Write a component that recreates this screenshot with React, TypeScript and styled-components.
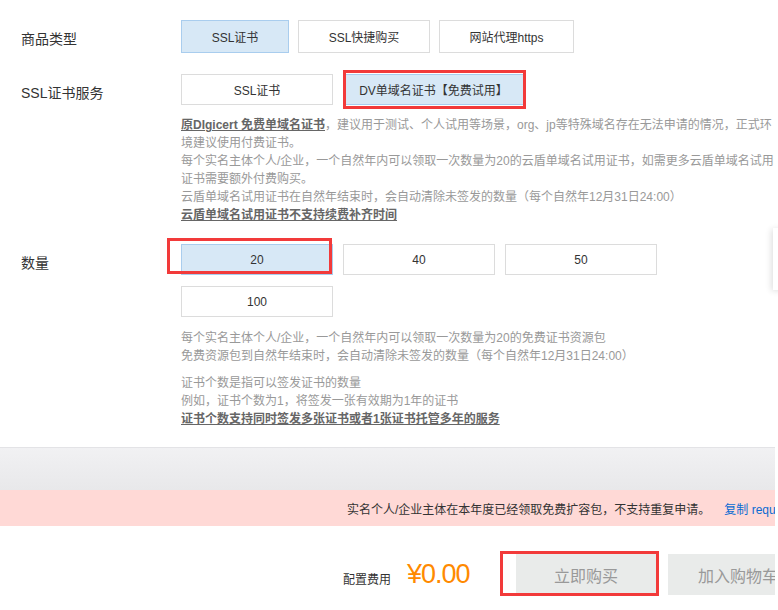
import styled, { createGlobalStyle } from 'styled-components';

const GlobalStyle = createGlobalStyle`
  html, body {
    margin: 0;
    padding: 0;
    background: #fff;
  }
  body {
    font-family: "Liberation Sans", Arial, "Noto Sans CJK SC", sans-serif;
    overflow: hidden;
  }
`;

const productTypes = [
  { id: 1, label: 'SSL证书', width: 108, active: true },
  { id: 2, label: 'SSL快捷购买', width: 132, active: false },
  { id: 3, label: '网站代理https', width: 135, active: false },
];

const services = [
  { id: 1, label: 'SSL证书', width: 152, active: false },
  { id: 2, label: 'DV单域名证书【免费试用】', width: 181, active: true },
];

const amounts = [
  { id: 1, label: '20', active: true },
  { id: 2, label: '40', active: false },
  { id: 3, label: '50', active: false },
  { id: 4, label: '100', active: false },
];

export default function App() {
  return (
    <Page>
      <GlobalStyle />
      <Main>
        <Form>
          <FieldRow>
            <Label>商品类型</Label>
            <Options $gap={9}>
              {productTypes.map((item) => (
                <Option key={item.id} $width={item.width} $height={33} $active={item.active}>
                  {item.label}
                </Option>
              ))}
            </Options>
          </FieldRow>

          <FieldRow $top={21}>
            <Label>SSL证书服务</Label>
            <div>
              <Options $gap={10}>
                {services.map((item) => (
                  <Option key={item.id} $width={item.width} $height={31} $active={item.active}>
                    {item.label}
                  </Option>
                ))}
              </Options>
              <Desc $top={11}>
                <Line>
                  <Strong>原DIgicert 免费单域名证书</Strong>，建议用于测试、个人试用等场景，org、jp等特殊域名存在无法申请的情况，正式环
                </Line>
                <Line>境建议使用付费证书。</Line>
                <Line>每个实名主体个人/企业，一个自然年内可以领取一次数量为20的云盾单域名试用证书，如需更多云盾单域名试用</Line>
                <Line>证书需要额外付费购买。</Line>
                <Line>云盾单域名试用证书在自然年结束时，会自动清除未签发的数量（每个自然年12月31日24:00）</Line>
                <Line>
                  <Strong>云盾单域名试用证书不支持续费补齐时间</Strong>
                </Line>
              </Desc>
            </div>
          </FieldRow>

          <FieldRow $top={20}>
            <Label>数量</Label>
            <div>
              <Options $gap={10} $rowGap={11} $width={476}>
                {amounts.map((item) => (
                  <Option key={item.id} $width={152} $height={31} $active={item.active}>
                    {item.label}
                  </Option>
                ))}
              </Options>
              <Desc $top={12}>
                <Line>每个实名主体个人/企业，一个自然年内可以领取一次数量为20的免费证书资源包</Line>
                <Line>免费资源包到自然年结束时，会自动清除未签发的数量（每个自然年12月31日24:00）</Line>
              </Desc>
              <Desc $top={9}>
                <Line>证书个数是指可以签发证书的数量</Line>
                <Line>例如，证书个数为1，将签发一张有效期为1年的证书</Line>
                <Line>
                  <Strong>证书个数支持同时签发多张证书或者1张证书托管多年的服务</Strong>
                </Line>
              </Desc>
            </div>
          </FieldRow>
        </Form>

        <Band />
        <Notice>
          实名个人/企业主体在本年度已经领取免费扩容包，不支持重复申请。
          <NoticeLink>复制 requestId</NoticeLink>
        </Notice>

        <Footer>
          <CostLabel>配置费用</CostLabel>
          <Price>¥0.00</Price>
          <BuyButton>立即购买</BuyButton>
          <BuyButton $gap={11}>加入购物车</BuyButton>
        </Footer>
      </Main>

      <SidePanel />
      <Marker $x={343} $y={70} $w={183} $h={39} />
      <Marker $x={167} $y={238} $w={165} $h={36} />
      <Marker $x={500} $y={551} $w={159} $h={45} />
    </Page>
  );
}

const Page = styled.div`
  position: relative;
  width: 778px;
  height: 610px;
  overflow: hidden;
`;

const Main = styled.div`
  width: 775px;
  overflow: hidden;
`;

const Form = styled.div`
  padding: 20px 0 0 21px;
`;

const FieldRow = styled.div<{ $top?: number }>`
  display: grid;
  grid-template-columns: 160px 1fr;
  margin-top: ${({ $top }) => $top ?? 0}px;
`;

const Label = styled.div`
  padding-top: 9px;
  font-size: 14px;
  line-height: 20px;
  color: #333;
  white-space: nowrap;
`;

const Options = styled.div<{ $gap: number; $rowGap?: number; $width?: number }>`
  display: flex;
  flex-wrap: wrap;
  column-gap: ${({ $gap }) => $gap}px;
  row-gap: ${({ $rowGap }) => $rowGap ?? 0}px;
  width: ${({ $width }) => ($width ? `${$width}px` : 'auto')};
`;

const Option = styled.button<{ $width: number; $height: number; $active: boolean }>`
  box-sizing: border-box;
  width: ${({ $width }) => $width}px;
  height: ${({ $height }) => $height}px;
  padding: 0;
  border: 1px solid ${({ $active }) => ($active ? '#a9cdee' : '#dcdcdc')};
  background: ${({ $active }) => ($active ? '#d7e8f6' : '#fff')};
  font-family: inherit;
  font-size: 12px;
  color: #333;
  cursor: pointer;
  white-space: nowrap;
`;

const Desc = styled.div<{ $top: number }>`
  margin-top: ${({ $top }) => $top}px;
  font-size: 12px;
  line-height: 18px;
  color: #999;
`;

const Line = styled.span`
  display: block;
  white-space: nowrap;
`;

const Strong = styled.span`
  font-weight: bold;
  color: #666;
  text-decoration: underline;
`;

const Band = styled.div`
  margin-top: 19px;
  height: 42px;
  border-top: 1px solid #e3e3e6;
  background: linear-gradient(#f1f1f3, #e8e8ea);
`;

const Notice = styled.div`
  display: flex;
  align-items: center;
  height: 36px;
  padding-left: 347px;
  background: #ffd9d6;
  font-size: 12px;
  color: #333;
  white-space: nowrap;
`;

const NoticeLink = styled.span`
  margin-left: 14px;
  color: #0a6bd2;
  cursor: pointer;
`;

const Footer = styled.div`
  display: flex;
  align-items: center;
  padding: 28px 0 0 343px;
  white-space: nowrap;
`;

const CostLabel = styled.span`
  margin-top: 7px;
  font-size: 12px;
  color: #333;
`;

const Price = styled.span`
  margin-left: 16px;
  font-size: 27px;
  letter-spacing: -1px;
  color: #ff8a00;
`;

const BuyButton = styled.button<{ $gap?: number }>`
  flex: none;
  width: 141px;
  height: 41px;
  margin-left: ${({ $gap }) => $gap ?? 46}px;
  padding: 0;
  border: none;
  background: #e9ebea;
  font-family: inherit;
  font-size: 16px;
  color: #999;
`;

const SidePanel = styled.div`
  position: absolute;
  left: 773px;
  top: 228px;
  width: 30px;
  height: 62px;
  background: #fff;
  box-shadow: -2px 1px 6px rgba(0, 0, 0, 0.12);
`;

const Marker = styled.div<{ $x: number; $y: number; $w: number; $h: number }>`
  position: absolute;
  left: ${({ $x }) => $x}px;
  top: ${({ $y }) => $y}px;
  width: ${({ $w }) => $w}px;
  height: ${({ $h }) => $h}px;
  box-sizing: border-box;
  border: 3px solid #f23a3a;
  pointer-events: none;
`;
